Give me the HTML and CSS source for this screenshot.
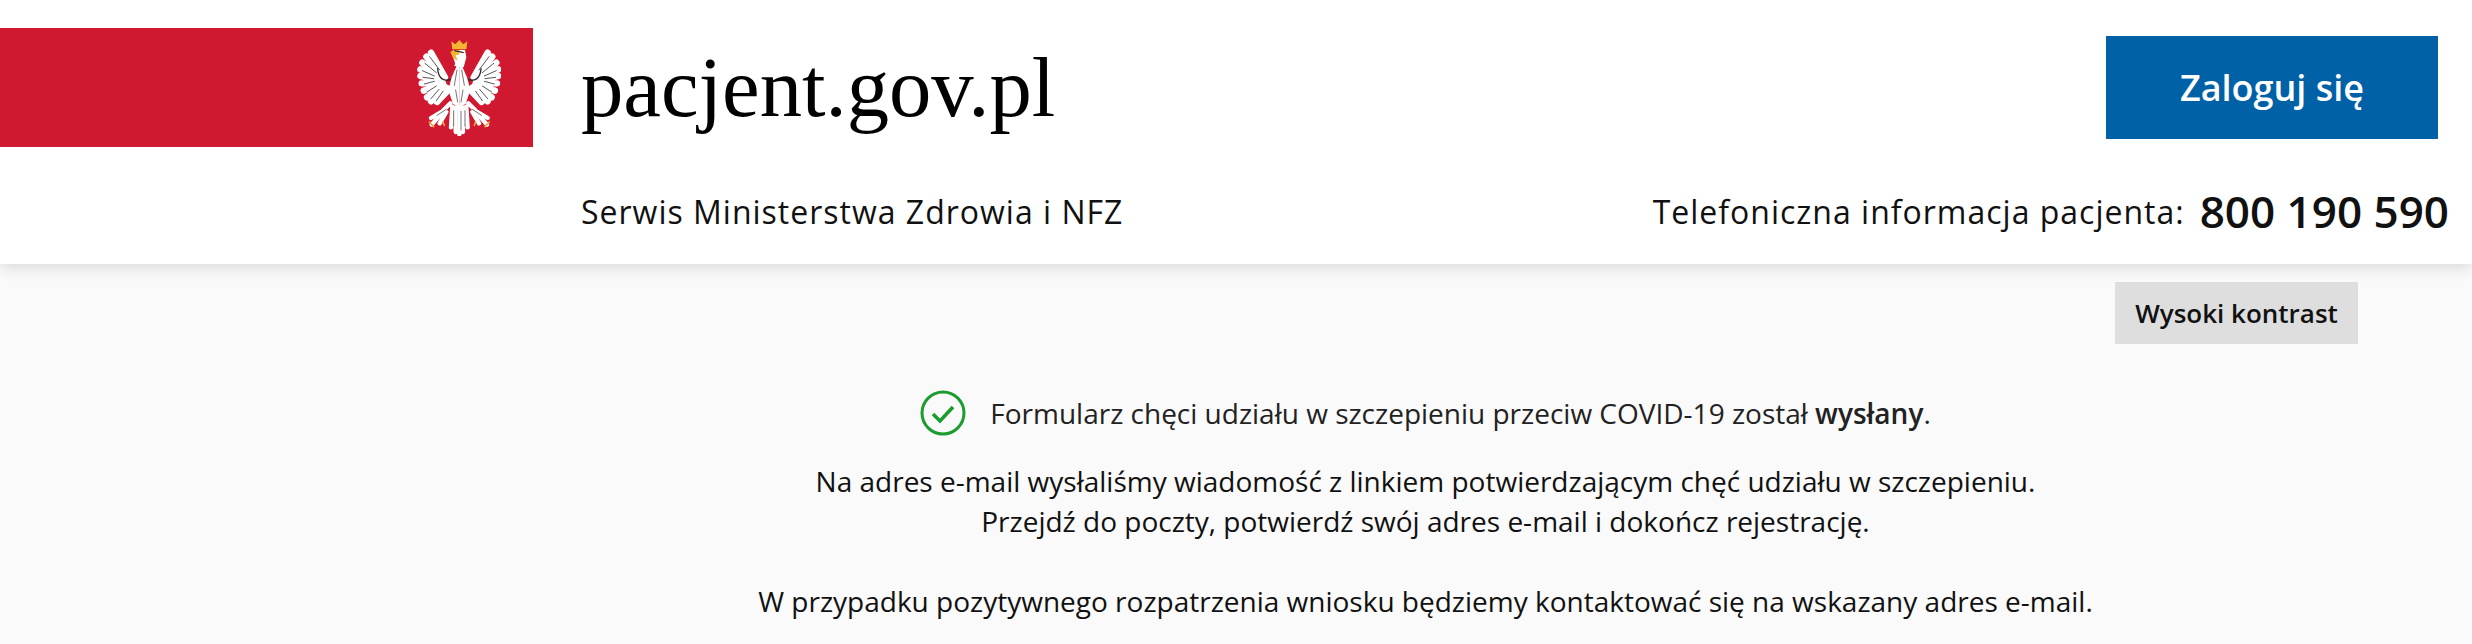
FILE: index.html
```html
<!DOCTYPE html>
<html lang="pl">
<head>
<meta charset="utf-8">
<title>pacjent.gov.pl</title>
<link rel="stylesheet" href="styles.css">
</head>
<body>
<header class="header">
  <div class="top">
    <div class="flag">
      <svg class="eagle" viewBox="108 60 252 288" width="84" height="96" aria-hidden="true">
        <defs>
          <g id="half">
            <g fill="none" stroke="#fff" stroke-width="19" stroke-linecap="round">
              <path d="M192 172 150 98M188 174 136 110M186 178 124 128M184 182 118 148M184 186 118 168M186 190 122 190M188 196 128 212M192 200 138 232M198 204 150 244M204 208 168 246"/>
            </g>
            <g fill="none" stroke="#35292d" stroke-width="2.4" stroke-linecap="round">
              <path d="M176 150 146 110M166 158 132 130M160 168 124 152M158 176 126 172M160 184 130 192M166 198 138 216M174 208 150 236M186 214 166 242"/>
              <path stroke-width="4" d="M170 146C172 176 188 188 218 176"/>
            </g>
            <path fill="#fff" d="M235 100 216 112 226 140 212 172 202 210 216 252 235 262Z"/>
            <path fill="none" stroke="#fff" stroke-width="13" stroke-linecap="round" d="M208 250 184 274 150 294M196 276 176 310M182 280 152 314M214 260 210 322M224 262 224 336M235 262 235 342"/>
            <path fill="none" stroke="#35292d" stroke-width="2" stroke-linecap="round" d="M228 150 220 196M224 210 230 246M218 272 218 318M230 274 230 330M196 268 168 286"/>
            <path fill="none" stroke="#f0a83c" stroke-width="5" stroke-linecap="round" d="M145 306 158 320M186 306 190 316"/>
          </g>
        </defs>
        <use href="#half"/>
        <use href="#half" transform="translate(470 0) scale(-1 1)"/>
        <path fill="#f2b632" d="M214 88 211 64l12 9 12-13 12 13 12-9-3 24z"/>
        <path fill="#fff" d="M216 90h36l4 22-8 30-28-4 6-18-4-10z"/>
        <path fill="#f2b632" d="M208 96 218 90h18l-2 14-10 2 6 16-14-8z"/>
        <path fill="none" stroke="#35292d" stroke-width="3.5" d="M220 92 248 98"/>
      </svg>
    </div>
    <h1 class="title">pacjent.gov.pl</h1>
    <a class="login" href="#">Zaloguj się</a>
  </div>
  <div class="bottom">
    <p class="subtitle">Serwis Ministerstwa Zdrowia i NFZ</p>
    <p class="phone">Telefoniczna informacja pacjenta: <strong class="number">800 190 590</strong></p>
  </div>
</header>
<main class="main">
  <div class="tools"><button class="contrast">Wysoki kontrast</button></div>
  <div class="content">
    <p class="status">
      <svg class="check" viewBox="0 0 46 46" width="46" height="46" aria-hidden="true">
        <circle cx="23" cy="23" r="21" fill="none" stroke="#1c9b2e" stroke-width="3"/>
        <path d="M13 24l7 7 13-14" fill="none" stroke="#1c9b2e" stroke-width="3.6"/>
      </svg>
      <span>Formularz chęci udziału w szczepieniu przeciw COVID-19 został <b class="strong">wysłany</b>.</span>
    </p>
    <p class="info">Na adres e-mail wysłaliśmy wiadomość z linkiem potwierdzającym chęć udziału w szczepieniu.<br>Przejdź do poczty, potwierdź swój adres e-mail i dokończ rejestrację.</p>
    <p class="info">W przypadku pozytywnego rozpatrzenia wniosku będziemy kontaktować się na wskazany adres e-mail.</p>
  </div>
</main>
</body>
</html>
```
FILE: styles.css
```css
* { box-sizing: border-box; }
html, body { margin: 0; height: 644px; overflow: hidden; }
body { background: #fafafa; font-family: "Open Sans", sans-serif; color: #111; }
.header { height: 264px; background: #fff; box-shadow: 0 2px 16px rgba(0,0,0,.16); position: relative; }
.top { display: flex; align-items: center; padding-top: 28px; height: 147px; }
.flag { width: 533px; height: 119px; background: #d01830; display: flex; align-items: center; justify-content: flex-end; padding-right: 32px; flex: none; }
.title { margin: 0 0 0 48px; font: 400 84.7px/119px "Liberation Serif", serif; color: #000; flex: 1; }
.login { flex: none; width: 332px; height: 103px; margin-right: 34px; background: #0161a6; color: #fff; font-size: 36px; font-weight: 600; text-decoration: none; display: flex; align-items: center; justify-content: center; }
.bottom { display: flex; justify-content: space-between; align-items: center; padding: 34px 23px 0 581px; }
.subtitle { margin: 0; font-size: 32px; letter-spacing: 1px; }
.phone { margin: 0; font-size: 32px; letter-spacing: 1px; display: flex; align-items: center; gap: 15px; }
.number { font-size: 44px; font-weight: 600; letter-spacing: 0; }
.main { font-size: 28px; line-height: 40px; color: #111; }
.tools { display: flex; justify-content: flex-end; padding: 18px 114px 0 0; }
.contrast { width: 243px; height: 62px; border: 0; background: #dedede; color: #111; font: 600 26px "Open Sans", sans-serif; }
.content { padding-left: 379px; text-align: center; }
.status { margin: 46px 0 0; display: flex; justify-content: center; align-items: center; gap: 24px; color: #222; }
.strong { font-weight: 600; }
.info { margin: 25px 0 40px; }
```
